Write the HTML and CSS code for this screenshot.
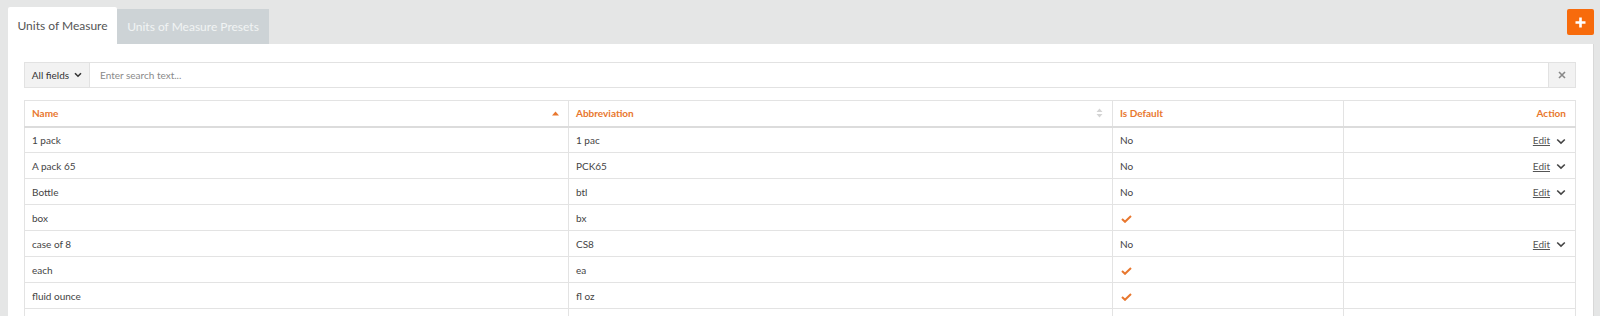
FILE: index.html
```html
<!DOCTYPE html>
<html>
<head>
<meta charset="utf-8">
<link rel="stylesheet" href="styles.css">
</head>
<body>
<div class="page">
  <div class="topbar">
    <div class="tabs">
      <div class="tab active">Units of Measure</div>
      <div class="tab">Units of Measure Presets</div>
    </div>
    <button class="add-btn" aria-label="Add">
      <svg width="13" height="13" viewBox="0 0 13 13"><path d="M6.5 1.5v10M1.5 6.5h10" stroke="#fff" stroke-width="2.6" stroke-linecap="butt"/></svg>
    </button>
  </div>
  <div class="panel">
    <div class="search">
      <div class="field-select">All fields
        <svg width="8" height="6" viewBox="0 0 8 6"><path d="M1 1.2l3 3 3-3" fill="none" stroke="#333" stroke-width="1.6"/></svg>
      </div>
      <div class="search-input">Enter search text...</div>
      <div class="clear-btn">
        <svg width="8" height="8" viewBox="0 0 8 8"><path d="M1 1l6 6M7 1L1 7" stroke="#888" stroke-width="1.6"/></svg>
      </div>
    </div>
    <table class="grid">
      <colgroup>
        <col class="c1"><col class="c2"><col class="c3"><col class="c4">
      </colgroup>
      <thead>
        <tr>
          <th><div class="th-in">Name<svg width="7" height="5" viewBox="0 0 7 5"><path d="M0 4.5L3.5 0.5 7 4.5z" fill="#e8772e"/></svg></div></th>
          <th><div class="th-in">Abbreviation<svg width="7" height="10" viewBox="0 0 7 10"><path d="M0.5 4L3.5 0.5 6.5 4z M0.5 6L3.5 9.5 6.5 6z" fill="#d4d4d4"/></svg></div></th>
          <th>Is Default</th>
          <th class="right">Action</th>
        </tr>
      </thead>
      <tbody>
        <tr><td>1 pack</td><td>1 pac</td><td>No</td><td class="right"><span class="edit">Edit</span><svg class="chev" width="10" height="7" viewBox="0 0 10 7"><path d="M1.2 1.5l3.8 3.6 3.8-3.6" fill="none" stroke="#444" stroke-width="1.6"/></svg></td></tr>
        <tr><td>A pack 65</td><td>PCK65</td><td>No</td><td class="right"><span class="edit">Edit</span><svg class="chev" width="10" height="7" viewBox="0 0 10 7"><path d="M1.2 1.5l3.8 3.6 3.8-3.6" fill="none" stroke="#444" stroke-width="1.6"/></svg></td></tr>
        <tr><td>Bottle</td><td>btl</td><td>No</td><td class="right"><span class="edit">Edit</span><svg class="chev" width="10" height="7" viewBox="0 0 10 7"><path d="M1.2 1.5l3.8 3.6 3.8-3.6" fill="none" stroke="#444" stroke-width="1.6"/></svg></td></tr>
        <tr><td>box</td><td>bx</td><td><svg class="check" width="11" height="8" viewBox="0 0 11 8"><path d="M1 4l3 2.8L10 1" fill="none" stroke="#e8772e" stroke-width="2"/></svg></td><td></td></tr>
        <tr><td>case of 8</td><td>CS8</td><td>No</td><td class="right"><span class="edit">Edit</span><svg class="chev" width="10" height="7" viewBox="0 0 10 7"><path d="M1.2 1.5l3.8 3.6 3.8-3.6" fill="none" stroke="#444" stroke-width="1.6"/></svg></td></tr>
        <tr><td>each</td><td>ea</td><td><svg class="check" width="11" height="8" viewBox="0 0 11 8"><path d="M1 4l3 2.8L10 1" fill="none" stroke="#e8772e" stroke-width="2"/></svg></td><td></td></tr>
        <tr><td>fluid ounce</td><td>fl oz</td><td><svg class="check" width="11" height="8" viewBox="0 0 11 8"><path d="M1 4l3 2.8L10 1" fill="none" stroke="#e8772e" stroke-width="2"/></svg></td><td></td></tr>
        <tr><td></td><td></td><td></td><td></td></tr>
      </tbody>
    </table>
  </div>
</div>
</body>
</html>
```

FILE: styles.css
```css
* { box-sizing: border-box; }
html, body { margin: 0; padding: 0; }
body {
  background: #e5e6e6;
  font-family: "Lato", "Open Sans", sans-serif;
  color: #444;
  height: 316px;
  overflow: hidden;
}
.page {
  padding: 7px 6px 0 8px;
}
.topbar {
  display: flex;
  justify-content: space-between;
  align-items: flex-start;
}
.tabs {
  display: flex;
  align-items: flex-end;
  height: 37px;
}
.tab {
  height: 35px;
  display: flex;
  align-items: center;
  justify-content: center;
  background: #cdd3d6;
  color: #f1f3f4;
  font-size: 12px;
  width: 152px;
  white-space: nowrap;
}
.tab.active {
  height: 37px;
  background: #fff;
  color: #555;
  width: 109px;
  border-radius: 2px 2px 0 0;
}
.add-btn {
  margin-top: 2px;
  width: 27px;
  height: 26px;
  border: 0;
  border-radius: 2px;
  background: #f76b0c;
  display: flex;
  align-items: center;
  justify-content: center;
  padding: 0;
}
.panel {
  background: #fff;
  padding: 18px 17px 0 16px;
  height: 272px;
  border-right: 1px solid #d8d8d8;
}
.search {
  display: flex;
  height: 26px;
  border: 1px solid #e2e2e2;
  margin-bottom: 12px;
}
.field-select {
  width: 65px;
  background: #f2f2f2;
  border-right: 1px solid #e2e2e2;
  display: flex;
  align-items: center;
  justify-content: center;
  gap: 5px;
  font-size: 10px;
  color: #333;
}
.search-input {
  flex: 1;
  display: flex;
  align-items: center;
  padding-left: 10px;
  font-size: 10px;
  color: #8a8a8a;
}
.clear-btn {
  width: 27px;
  background: #f2f2f2;
  border-left: 1px solid #e2e2e2;
  display: flex;
  align-items: center;
  justify-content: center;
}
.grid {
  width: 100%;
  border-collapse: collapse;
  table-layout: fixed;
  font-size: 10px;
}
.c1 { width: 544px; }
.c2 { width: 544px; }
.c3 { width: 231px; }
.c4 { width: auto; }
.grid th, .grid td {
  border: 1px solid #e3e3e3;
  height: 26px;
  padding: 0 7px;
  text-align: left;
  vertical-align: middle;
}
.grid th {
  color: #e8772e;
  font-weight: 700;
  border-bottom: 2px solid #dcdcdc;
}
.th-in {
  display: flex;
  justify-content: space-between;
  align-items: center;
  padding-right: 2px;
}
.grid td { color: #444; }
.grid .right { text-align: right; padding-right: 9px; }
.edit {
  text-decoration: underline;
  color: #555;
  margin-right: 6px;
}
.chev { vertical-align: middle; }
.check { margin-left: 1px; vertical-align: middle; }
```
